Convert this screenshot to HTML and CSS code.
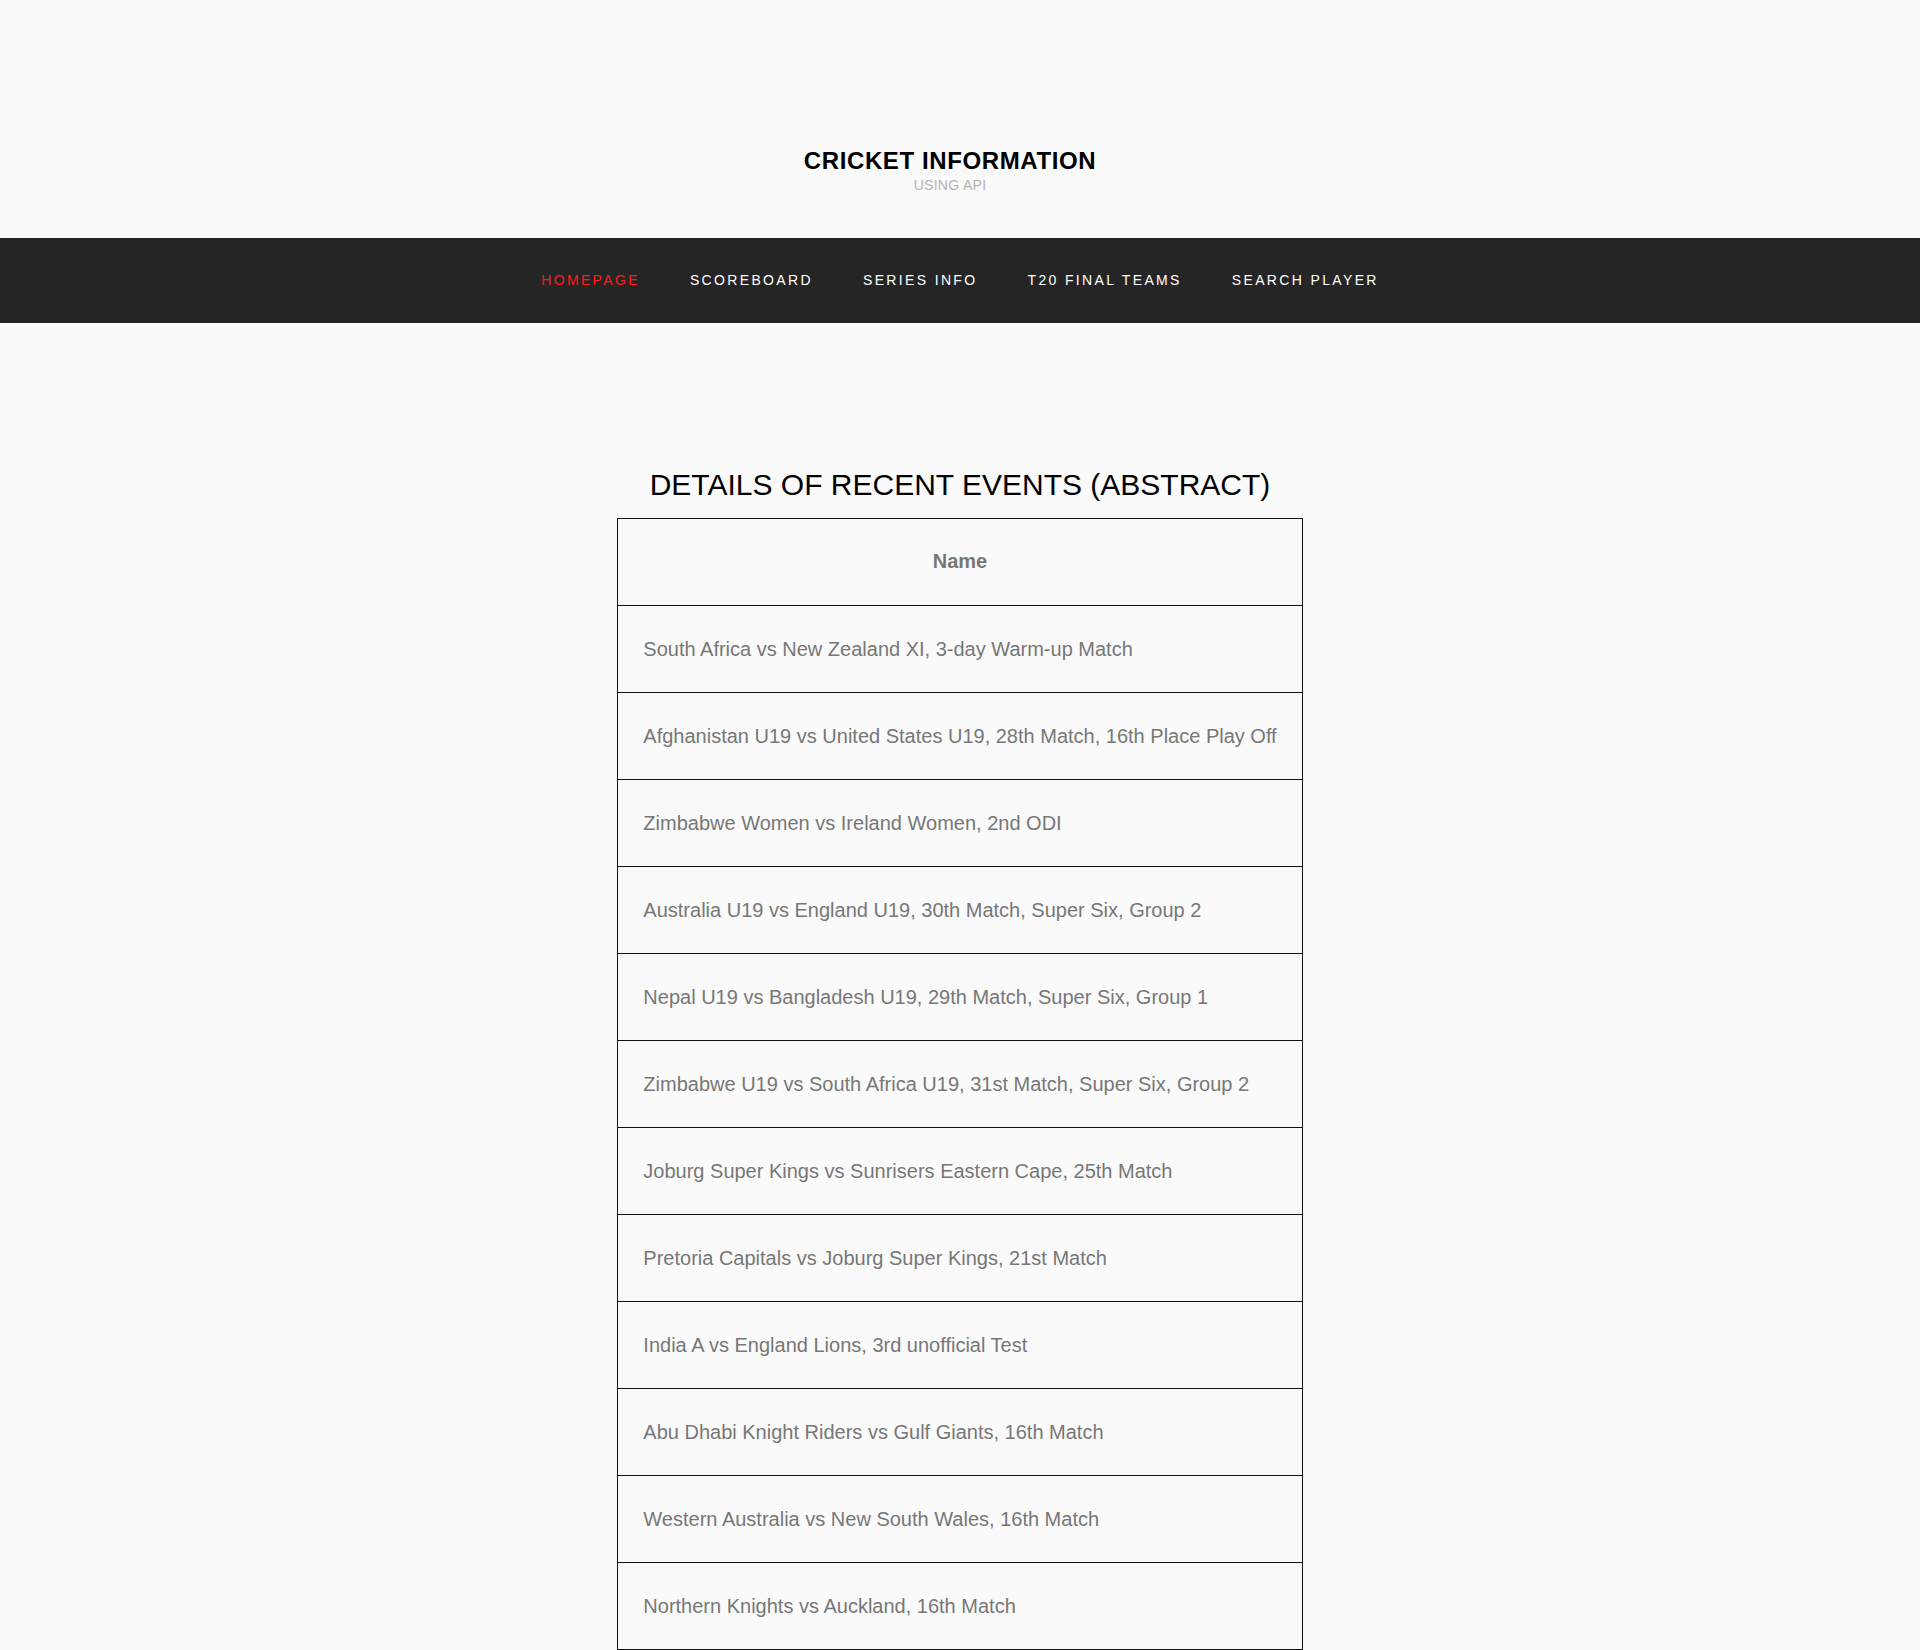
FILE: index.html
```html
<!DOCTYPE html>
<html lang="en">
<head>
<meta charset="utf-8">
<title>Cricket Information</title>
<link rel="stylesheet" href="styles.css">
</head>
<body>
<header class="site-header">
  <h1 class="site-title">CRICKET INFORMATION</h1>
  <p class="site-subtitle">USING API</p>
</header>
<nav class="main-nav">
  <a class="nav-link active" href="#">HOMEPAGE</a>
  <a class="nav-link" href="#">SCOREBOARD</a>
  <a class="nav-link" href="#">SERIES INFO</a>
  <a class="nav-link" href="#">T20 FINAL TEAMS</a>
  <a class="nav-link" href="#">SEARCH PLAYER</a>
</nav>
<main class="content">
  <h2 class="section-title">DETAILS OF RECENT EVENTS (ABSTRACT)</h2>
  <table class="events">
    <thead>
      <tr><th>Name</th></tr>
    </thead>
    <tbody>
      <tr><td>South Africa vs New Zealand XI, 3-day Warm-up Match</td></tr>
      <tr><td>Afghanistan U19 vs United States U19, 28th Match, 16th Place Play Off</td></tr>
      <tr><td>Zimbabwe Women vs Ireland Women, 2nd ODI</td></tr>
      <tr><td>Australia U19 vs England U19, 30th Match, Super Six, Group 2</td></tr>
      <tr><td>Nepal U19 vs Bangladesh U19, 29th Match, Super Six, Group 1</td></tr>
      <tr><td>Zimbabwe U19 vs South Africa U19, 31st Match, Super Six, Group 2</td></tr>
      <tr><td>Joburg Super Kings vs Sunrisers Eastern Cape, 25th Match</td></tr>
      <tr><td>Pretoria Capitals vs Joburg Super Kings, 21st Match</td></tr>
      <tr><td>India A vs England Lions, 3rd unofficial Test</td></tr>
      <tr><td>Abu Dhabi Knight Riders vs Gulf Giants, 16th Match</td></tr>
      <tr><td>Western Australia vs New South Wales, 16th Match</td></tr>
      <tr><td>Northern Knights vs Auckland, 16th Match</td></tr>
    </tbody>
  </table>
</main>
</body>
</html>
```

FILE: styles.css
```css
html, body {
  margin: 0;
  padding: 0;
}

body {
  background: #fafafa;
  font-family: "Liberation Sans", Arial, sans-serif;
  color: #000;
}

.site-header {
  display: flex;
  flex-direction: column;
  align-items: center;
  padding: 147px 20px 45px 0;
}

.site-title {
  margin: 0;
  font-size: 24px;
  line-height: 28px;
  font-weight: bold;
  letter-spacing: 0.6px;
  color: #000;
}

.site-subtitle {
  margin: 2px 0 0;
  font-size: 14px;
  line-height: 16px;
  letter-spacing: 0.3px;
  color: #b3b3b3;
}

.main-nav {
  background: #252525;
  display: flex;
  justify-content: center;
  padding: 34px 0 35px;
}

.nav-link {
  display: block;
  padding: 0 25px;
  font-size: 14px;
  line-height: 16px;
  letter-spacing: 2.35px;
  color: #ffffff;
  text-decoration: none;
}

.nav-link.active {
  color: #ff1a1a;
}

.content {
  display: flex;
  flex-direction: column;
  align-items: center;
  padding-top: 145px;
}

.section-title {
  margin: 0 0 16px;
  font-size: 30px;
  line-height: 34px;
  font-weight: normal;
  color: #000;
}

.events {
  border-collapse: collapse;
  border: 1px solid #111;
}

.events th,
.events td {
  border: 1px solid #111;
  padding: 31px 25px;
  font-size: 20px;
  line-height: 24px;
  color: #777;
}

.events th {
  text-align: center;
  font-weight: bold;
  padding-top: 30px;
  padding-bottom: 32px;
}

.events td {
  text-align: left;
}
```
